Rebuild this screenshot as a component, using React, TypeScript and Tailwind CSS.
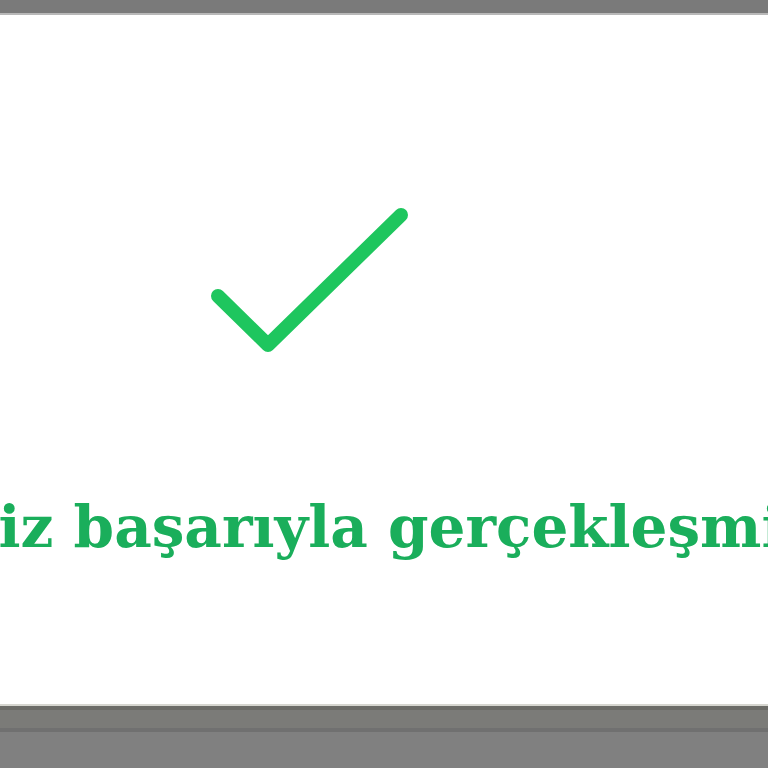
export default function App() {
  return (
    <div className="flex h-[768px] w-[768px] flex-col overflow-hidden bg-white">
      <div className="h-[13px] shrink-0 bg-[#7a7a7a]" />
      <div className="h-[2px] shrink-0 bg-[#b8b8b8]" />
      <main className="flex flex-1 flex-col">
        <div className="flex h-[372px] items-end pl-[208px] pb-[21px]">
          <svg width="204" height="158" viewBox="0 0 204 158" fill="none">
            <path
              d="M10 88 L60 137 L193 7"
              stroke="#1ec65e"
              strokeWidth="14"
              strokeLinecap="round"
              strokeLinejoin="round"
            />
          </svg>
        </div>
        <div className="mt-[111px] flex whitespace-nowrap">
          <p
            className="ml-[-270px] text-[58px] font-bold leading-none text-[#1aae5b]"
            style={{ fontFamily: '"DejaVu Serif", "Liberation Serif", serif' }}
          >
            Ödemeniz başarıyla gerçekleşmiştir.
          </p>
        </div>
      </main>
      <div className="h-[2px] shrink-0 bg-[#d6d6d0]" />
      <div className="h-[4px] shrink-0 bg-[#6c6c68]" />
      <div className="h-[18px] shrink-0 bg-[#7b7b78]" />
      <div className="h-[4px] shrink-0 bg-[#707070]" />
      <div className="h-[36px] shrink-0 bg-[#808080]" />
    </div>
  );
}
